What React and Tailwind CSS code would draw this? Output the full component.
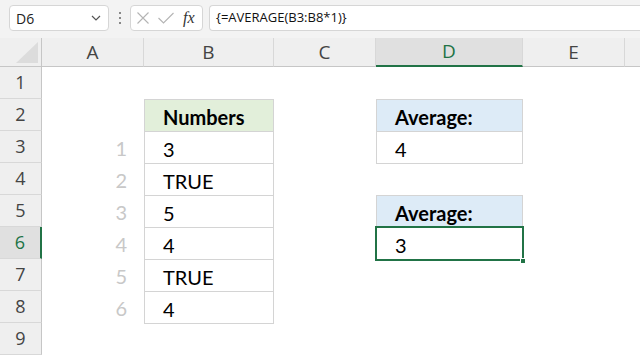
import React from "react";

const COLS = ["A", "B", "C", "D", "E"];
const ROWS = [1, 2, 3, 4, 5, 6, 7, 8, 9];
const NUMBERS = ["3", "TRUE", "5", "4", "TRUE", "4"];

const uiFont = { fontFamily: '"Open Sans", "Noto Sans", sans-serif' };
const cellFont = { fontFamily: 'Lato, "Liberation Sans", sans-serif' };

function Toolbar() {
  return (
    <div className="h-[38px] bg-[#f3f3f3] flex items-start pt-[5px] pl-[9px]" style={uiFont}>
      <div className="w-[100px] h-[26px] bg-white border border-[#d6d6d6] rounded-[4px] flex items-center justify-between pl-[6px] pr-[7px]">
        <span className="text-[14px] text-[#222]">D6</span>
        <svg width="10" height="6" viewBox="0 0 10 6">
          <path d="M1 1 L5 5 L9 1" stroke="#555" strokeWidth="1.2" fill="none" />
        </svg>
      </div>
      <div className="w-[21px] h-[26px] flex flex-col items-center justify-center gap-[3px]">
        <span className="w-[2px] h-[2px] bg-[#888]" />
        <span className="w-[2px] h-[2px] bg-[#888]" />
        <span className="w-[2px] h-[2px] bg-[#888]" />
      </div>
      <div className="w-[73px] h-[26px] bg-white border border-[#d6d6d6] rounded-[4px] flex items-center pl-[6px] gap-[9px]">
        <svg width="12" height="12" viewBox="0 0 12 12">
          <path d="M0.5 0.5 L11.5 11.5 M11.5 0.5 L0.5 11.5" stroke="#b4b4b4" strokeWidth="1.1" fill="none" />
        </svg>
        <svg width="16" height="12" viewBox="0 0 16 12">
          <path d="M0.5 6 L5.5 11 L15.5 1" stroke="#b4b4b4" strokeWidth="1.1" fill="none" />
        </svg>
        <span className="text-[16px] italic text-[#333] leading-none" style={{ fontFamily: '"Liberation Serif", serif' }}>
          fx
        </span>
      </div>
      <div className="flex-1 ml-[6px] h-[26px] bg-white border border-[#d6d6d6] border-r-0 rounded-l-[4px] flex items-center pl-[6px]">
        <span className="text-[13px] text-[#111]">{"{=AVERAGE(B3:B8*1)}"}</span>
      </div>
    </div>
  );
}

function TableCell({ children, bold, bg }) {
  return (
    <div className={`h-[32px] flex items-center pl-[18px] pt-[2px] text-[20px] text-black ${bold ? "font-bold" : ""} ${bg || ""}`}>
      {children}
    </div>
  );
}

export default function App() {
  return (
    <div className="w-[640px] h-[358px] overflow-hidden bg-white flex flex-col">
      <Toolbar />
      <div className="grid grid-cols-[42px_102px_130px_102px_147px_102px_1fr] grid-rows-[29px_repeat(9,32px)]">
        {/* corner */}
        <div className="bg-[#efefef] border-r border-b border-[#c6c6c6] flex items-end justify-end pr-[3px] pb-[3px]">
          <svg width="22" height="21" viewBox="0 0 22 21">
            <path d="M22 0 L22 21 L0 21 Z" fill="#dcdcdc" />
          </svg>
        </div>
        {COLS.map((c) => (
          <div
            key={c}
            className={`flex items-center justify-center text-[19px] border-r border-[#d8d8d8] ${
              c === "D" ? "bg-[#e0e0e0] text-[#217346] border-b-2 border-b-[#217346]" : "bg-[#efefef] text-[#444] border-b border-b-[#c6c6c6]"
            }`}
            style={uiFont}
          >
            {c}
          </div>
        ))}
        <div className="bg-[#efefef] border-b border-[#c6c6c6]" />

        {/* row headers */}
        {ROWS.map((r) => (
          <div
            key={r}
            className={`col-start-1 flex items-center justify-center text-[18px] border-b border-b-[#d8d8d8] ${
              r === 6 ? "bg-[#e0e0e0] text-[#217346] border-r-2 border-r-[#217346]" : "bg-[#efefef] text-[#444] border-r border-r-[#c6c6c6]"
            }`}
            style={{ ...uiFont, gridRowStart: r + 1 }}
          >
            {r}
          </div>
        ))}

        {/* index numbers in column A */}
        {NUMBERS.map((_, i) => (
          <div
            key={i}
            className="col-start-2 flex items-center justify-end pr-[17px] pt-[2px] text-[20px] text-[#c8c8c8]"
            style={{ ...cellFont, gridRowStart: i + 4 }}
          >
            {i + 1}
          </div>
        ))}

        {/* Numbers table */}
        <div className="col-start-3 row-start-3 row-span-7 border border-[#d4d4d4] divide-y divide-[#d4d4d4] h-[225px]" style={cellFont}>
          <TableCell bold bg="bg-[#e2efda]">Numbers</TableCell>
          {NUMBERS.map((n, i) => (
            <TableCell key={i}>{n}</TableCell>
          ))}
        </div>

        {/* Average table 1 */}
        <div className="col-start-5 row-start-3 row-span-2 border border-[#d4d4d4] divide-y divide-[#d4d4d4] h-[65px]" style={cellFont}>
          <TableCell bold bg="bg-[#ddebf7]">Average:</TableCell>
          <TableCell>4</TableCell>
        </div>

        {/* Average table 2 */}
        <div className="col-start-5 row-start-6 row-span-2 border border-[#d4d4d4] divide-y divide-[#d4d4d4] h-[65px]" style={cellFont}>
          <TableCell bold bg="bg-[#ddebf7]">Average:</TableCell>
          <div className="relative">
            <TableCell>3</TableCell>
            <div className="absolute left-[-2px] top-[-2px] right-[-2px] bottom-[-1px] border-2 border-[#217346]" />
            <div className="absolute right-[-4px] bottom-[-4px] w-[6px] h-[6px] bg-[#217346] border border-white" />
          </div>
        </div>
      </div>
    </div>
  );
}
